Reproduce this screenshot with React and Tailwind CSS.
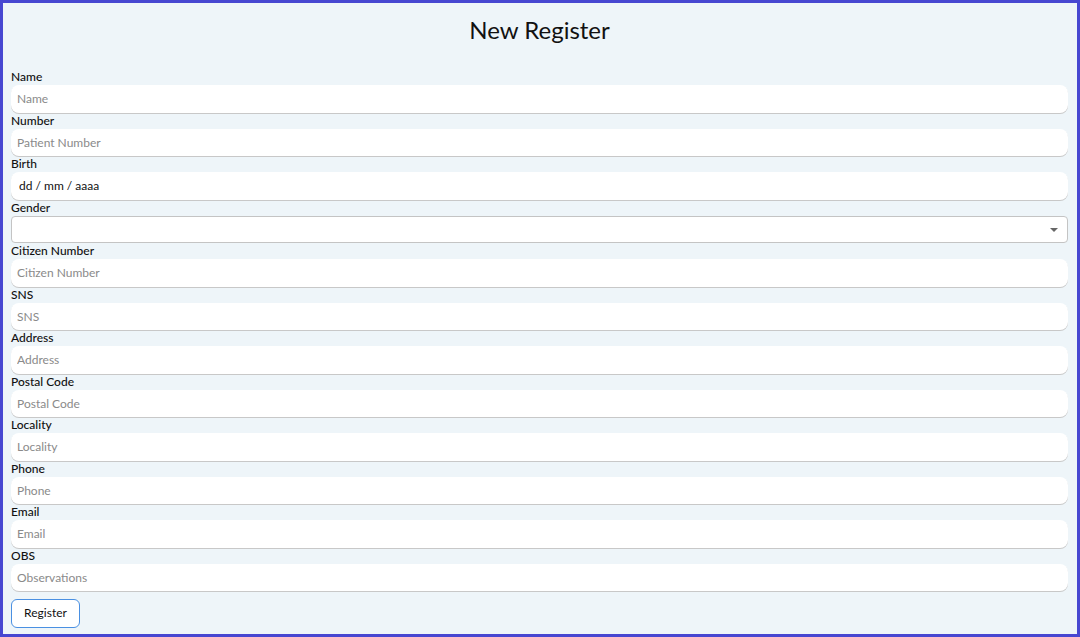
const fields = [
  { label: 'Name', placeholder: 'Name' },
  { label: 'Number', placeholder: 'Patient Number' },
  { label: 'Birth', placeholder: 'dd / mm / aaaa', date: true },
  { label: 'Gender', select: true },
  { label: 'Citizen Number', placeholder: 'Citizen Number' },
  { label: 'SNS', placeholder: 'SNS' },
  { label: 'Address', placeholder: 'Address' },
  { label: 'Postal Code', placeholder: 'Postal Code' },
  { label: 'Locality', placeholder: 'Locality' },
  { label: 'Phone', placeholder: 'Phone' },
  { label: 'Email', placeholder: 'Email' },
  { label: 'OBS', placeholder: 'Observations' },
];

function Field({ f }) {
  return (
    <div className="flex flex-col">
      <label className="h-4 text-[12px] leading-4 font-medium text-[#111]">{f.label}</label>
      {f.select ? (
        <div className="relative h-[27.5px]">
          <select className="w-full h-full appearance-none bg-white border border-[#c4c4c4] rounded-[4px] px-1.5 text-xs outline-none" defaultValue="">
            <option value=""></option>
            <option>Male</option>
            <option>Female</option>
          </select>
          <span className="absolute right-[10px] top-[12px] w-0 h-0 border-l-[4px] border-r-[4px] border-t-[4px] border-l-transparent border-r-transparent border-t-[#666] pointer-events-none" />
        </div>
      ) : (
        <input
          type="text"
          placeholder={f.placeholder}
          className={`h-[27.5px] w-full bg-white rounded-lg shadow-[0_1px_0_#c8c8c8] px-1.5 text-xs outline-none ${f.date ? 'placeholder:text-[#111] px-2' : 'placeholder:text-[#8a8a8a]'}`}
        />
      )}
    </div>
  );
}

export default function App() {
  return (
    <div
      className="h-[637px] w-[1080px] border-[3px] border-[#4747d1] bg-[#eef5f9] pl-2 pr-[9px] text-[#111]"
      style={{ fontFamily: 'Lato, "Noto Sans", sans-serif' }}
    >
      <h1 className="pt-[11px] h-[66px] text-center text-[24px] leading-8 text-[#111]">New Register</h1>
      <form className="flex flex-col" onSubmit={(e) => e.preventDefault()}>
        {fields.map((f) => (
          <Field key={f.label} f={f} />
        ))}
        <div className="mt-[7.5px]">
          <button className="h-[29px] w-[69px] bg-white border border-[#4a90e2] rounded-md text-xs text-[#111]">
            Register
          </button>
        </div>
      </form>
    </div>
  );
}
